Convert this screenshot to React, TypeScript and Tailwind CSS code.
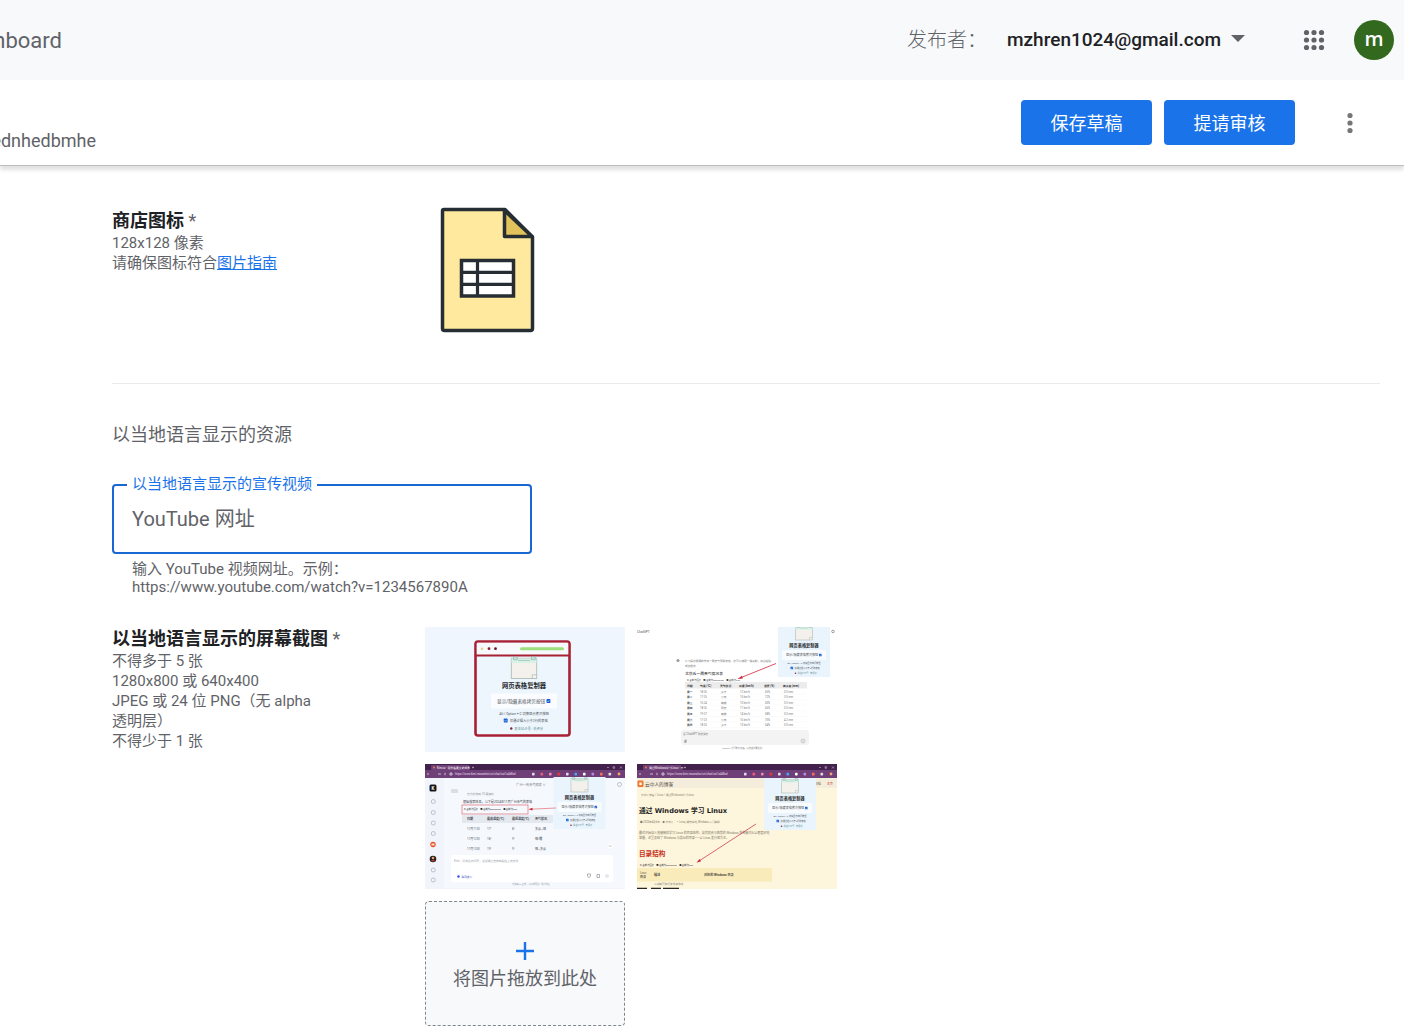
import { useState } from "react";
import type { ReactNode } from "react";
import clsx from "clsx";

const SMALL_TEXT = "text-[15px] leading-5 text-[#5f6368]";

function DotsIcon({ columns, className }: { columns: number[]; className?: string }) {
  return (
    <svg viewBox="0 0 24 24" fill="currentColor" className={className} aria-hidden="true">
      {columns.map((cx) =>
        [4.5, 12, 19.5].map((cy) => <circle key={`${cx}-${cy}`} cx={cx} cy={cy} r="2.6" />)
      )}
    </svg>
  );
}

function SheetIcon() {
  return (
    <svg viewBox="0 0 125 126" className="h-[126px] w-[125px]" role="img" aria-label="商店图标">
      <path
        d="M19 2.5H80L107.500 30V121.500a2 2 0 0 1-2 2H19.500a2 2 0 0 1-2-2V4a1.500 1.500 0 0 1 1.500-1.500z"
        fill="#ffe99e"
        stroke="#262d33"
        strokeWidth="3.500"
        strokeLinejoin="round"
      />
      <path d="M79.500 3.500V29.500H107z" fill="#e2c25b" stroke="#262d33" strokeWidth="3.500" strokeLinejoin="round" />
      <rect x="36.500" y="53.500" width="52" height="35.500" fill="#fff" stroke="#262d33" strokeWidth="3.500" />
      <path d="M36 65.300h53M36 77.300h53M52.500 53v36" stroke="#262d33" strokeWidth="3.200" />
    </svg>
  );
}

function Check({ x, y, s = 2.6 }: { x: number; y: number; s?: number }) {
  return (
    <g>
      <rect x={x} y={y} width={s} height={s} rx="0.4" fill="#1a5fd0" />
      <path
        d={`M${x + s * 0.22} ${y + s * 0.5}l${s * 0.2} ${s * 0.22}l${s * 0.36} ${-s * 0.42}`}
        fill="none"
        stroke="#fff"
        strokeWidth="0.35"
      />
    </g>
  );
}

// Extension popup, drawn around the centre of its title.
function PopupBody() {
  return (
    <g>
      <rect x="-8.500" y="-18.500" width="17" height="13.500" fill="#f4f1ec" stroke="#a3b0ac" strokeWidth="0.5" />
      <rect x="-8.300" y="-18.300" width="16.600" height="3" fill="#d9f2e8" />
      <path d="M-7 -19.500h2.500v2h-2.500zM5 -19.500h2.500v2h-2.500zM-4 -17h8" fill="#c7e2d8" stroke="#6f9c92" strokeWidth="0.3" />
      <path d="M5.500 -5v-2.500h3" fill="none" stroke="#a3b0ac" strokeWidth="0.4" />
      <text y="1.500" textAnchor="middle" fontSize="4.200" fontWeight="700" fill="#26292c">
        网页表格复制器
      </text>
      <rect x="-22" y="5" width="44" height="10" rx="1" fill="#fff" opacity="0.7" />
      <text x="-18" y="11.300" fontSize="3.100" fill="#4b5158">
        显示/隐藏表格拷贝按钮
      </text>
      <Check x={15} y={8.700} />
      <text y="19" textAnchor="middle" fontSize="2.200" fill="#4b5158">
        Alt / Option + C 切换显示拷贝按钮
      </text>
      <Check x={-13.500} y={21.700} />
      <text x="-9.500" y="24" fontSize="2.200" fill="#4b5158">
        仅通过插入小于2行的表格
      </text>
      <circle cx="-8.500" cy="28.300" r="0.8" fill="#7a2838" />
      <text x="-6.500" y="29.200" fontSize="2.200" fill="#4b7f8c">
        关注公众号 · 去评分
      </text>
    </g>
  );
}

function Popup({ x, y }: { x: number; y: number }) {
  return (
    <g transform={`translate(${x} ${y})`}>
      <rect x="-26" y="-20" width="52" height="52" fill="#eaf4fc" />
      <PopupBody />
    </g>
  );
}

function BrowserBar({ title }: { title: string }) {
  const colors = ["#e8d9ee", "#ee5d78", "#f08bb0", "#e63a3a", "#e8d9ee", "#4aa3ff", "#fff", "#b98ae0", "#ff6d5a", "#ddd"];
  return (
    <g>
      <rect width="200" height="14" fill="#6f3f78" />
      <rect width="200" height="6" fill="#43214d" />
      <rect x="6" y="1" width="38" height="5" rx="1" fill="#6f3f78" />
      <circle cx="9" cy="3.500" r="1" fill="#f07c3c" />
      <text x="12" y="4.500" fontSize="2.800" fill="#fff">
        {title}
      </text>
      <path d="M47 3.500h2M48 2.500v2M182 3.500h2M188 2.700h1.600v1.600h-1.600zM195 2.500l2 2M197 2.500l-2 2" stroke="#d9cbe0" strokeWidth="0.5" fill="none" />
      <path d="M4 10h-2M13 10h3M20 8.800v2.400M25 9h2v2h-2z" stroke="#e6dcec" strokeWidth="0.8" fill="none" />
      <text x="30" y="11" fontSize="2.800" fill="#eadff0">
        https://www.kimi.moonshot.cn/chat/cst1s4d8cd
      </text>
      {colors.map((color, i) => (
        <rect key={i} x={107 + i * 8.500} y="8.800" width="2.600" height="2.600" rx="0.600" fill={color} />
      ))}
      <circle cx="194" cy="10" r="1.400" fill="#f7a36b" />
    </g>
  );
}

function Thumb({ label, children }: { label: string; children: ReactNode }) {
  return (
    <svg viewBox="0 0 200 125" className="h-[125px] w-[200px] overflow-hidden" role="img" aria-label={label}>
      {children}
    </svg>
  );
}

function PopupThumb() {
  return (
    <Thumb label="插件弹窗">
      <rect width="200" height="125" fill="#eff6fd" />
      <rect x="50.500" y="14.500" width="94" height="94" rx="2.500" fill="#eef6fd" stroke="#a82034" strokeWidth="2.600" />
      <rect x="51.800" y="15.800" width="91.400" height="12" fill="#f7f8fb" />
      <path d="M50 28.500h95" stroke="#a82034" strokeWidth="2" />
      <circle cx="57" cy="21.700" r="1.300" fill="#e0d48b" />
      <circle cx="64" cy="21.700" r="1.400" fill="#8c1f31" />
      <circle cx="70.500" cy="21.700" r="1.400" fill="#5f1a2a" />
      <rect x="95" y="20.200" width="44" height="3" rx="1.500" fill="#9be07c" />
      <g transform="translate(99 59) scale(1.5)">
        <PopupBody />
      </g>
    </Thumb>
  );
}

const WEATHER_COLUMNS = [50, 63, 83, 102, 127, 146];
const WEATHER_HEAD = ["日期", "气温 (°C)", "天气状况", "风速 (km/h)", "湿度 (%)", "降水量 (mm)"];
const WEATHER_ROWS = [
  ["周一", "18-26", "多云", "12 km/h", "65%", "0.0 mm"],
  ["周二", "17-25", "小雨", "15 km/h", "72%", "3.5 mm"],
  ["周三", "16-24", "晴朗", "10 km/h", "60%", "0.0 mm"],
  ["周四", "18-26", "阴天", "11 km/h", "66%", "0.0 mm"],
  ["周五", "19-27", "晴朗", "14 km/h", "58%", "0.0 mm"],
  ["周六", "17-23", "小雨", "16 km/h", "75%", "4.2 mm"],
  ["周日", "18-25", "多云", "13 km/h", "64%", "0.0 mm"],
];

function ChatThumb() {
  return (
    <Thumb label="ChatGPT 表格">
      <rect width="200" height="125" fill="#fff" />
      <text x="0" y="5.500" fontSize="3.200" fill="#555">
        ChatGPT
      </text>
      <circle cx="41" cy="33.500" r="1.500" fill="#999" />
      <text x="48" y="35" fontSize="2.700" fill="#777">
        以下是您所需的未来一周天气预报表格，您可以使用一键复制，将它粘贴
      </text>
      <text x="48" y="39.500" fontSize="2.700" fill="#777">
        或文档中
      </text>
      <text x="48" y="47.700" fontSize="3.800" fontWeight="500" fill="#333">
        北京近一周天气情况表
      </text>
      <text x="50" y="53.700" fontSize="2.300" fill="#444">
        ⧉ 复制为图片　■ 复制为Markdown　● 复制为CSV
      </text>
      <rect x="48" y="55" width="122" height="6.500" fill="#ececec" />
      {WEATHER_HEAD.map((cell, i) => (
        <text key={cell} x={WEATHER_COLUMNS[i]} y="59.500" fontSize="2.800" fontWeight="700" fill="#333">
          {cell}
        </text>
      ))}
      {WEATHER_ROWS.map((row, r) => (
        <g key={row[0]}>
          {row.map((cell, i) => (
            <text
              key={i}
              x={WEATHER_COLUMNS[i] + (i > 1 ? 1 : 0)}
              y={65.500 + r * 5.600}
              fontSize="2.700"
              fontWeight={i === 0 ? 700 : 400}
              fill={i === 0 ? "#333" : "#777"}
            >
              {cell}
            </text>
          ))}
          <path d={`M48 ${67 + r * 5.600}h122`} stroke="#eee" strokeWidth="0.3" />
        </g>
      ))}
      <rect x="44" y="103" width="128" height="15" rx="3" fill="#f3f3f3" />
      <text x="46" y="108" fontSize="2.600" fill="#777">
        给“ChatGPT”发送消息
      </text>
      <path d="M48 113v3M49 112.500v3" stroke="#555" strokeWidth="0.600" />
      <circle cx="166" cy="114" r="2.200" fill="#ddd" stroke="#aaa" strokeWidth="0.3" />
      <text x="106" y="121.800" textAnchor="middle" fontSize="2.200" fill="#888">
        ChatGPT 也可能会犯错。请核查重要信息。
      </text>
      <Popup x={167} y={18} />
      <path d="M139 36.500L103 51" stroke="#d3263c" strokeWidth="0.8" />
      <path d="M100.500 52l4.500-3.200l0.800 2.800z" fill="#d3263c" />
      <circle cx="196" cy="4.500" r="1.300" fill="none" stroke="#666" strokeWidth="0.600" />
    </Thumb>
  );
}

const KIMI_COLUMNS = [42, 62, 87, 110];
const KIMI_ROWS = [
  ["11月11日", "17°", "8°", "多云~晴"],
  ["11月12日", "18°", "9°", "晴/霾"],
  ["11月13日", "19°", "9°", "晴~多云"],
];

function KimiThumb() {
  return (
    <Thumb label="Kimi 表格">
      <rect width="200" height="125" fill="#f1f4fa" />
      <rect x="19" y="14" width="181" height="110" fill="#f5f8fd" />
      <BrowserBar title="Kimi.ai - 帮你看更大的世界" />
      <rect x="4.500" y="20.500" width="7" height="7" rx="1.500" fill="#16181b" />
      <text x="8" y="25.700" textAnchor="middle" fontSize="4.500" fontWeight="700" fill="#fff">
        K
      </text>
      {[37.500, 48.500, 59, 69.500, 106, 116].map((y) => (
        <rect key={y} x="6.500" y={y - 1.800} width="3.600" height="3.600" rx="1" fill="none" stroke="#9aa3ad" strokeWidth="0.600" />
      ))}
      <circle cx="8" cy="80.500" r="2.700" fill="#e5552a" />
      <path d="M6.500 79.500h3v2h-3z" fill="#ffd9c4" />
      <circle cx="8" cy="95" r="3.300" fill="#26211e" />
      <circle cx="8" cy="94" r="1.300" fill="#e3a36f" />
      <path d="M5.700 97.200q2.300-2.500 4.600 0z" fill="#d9423b" />
      <text x="106" y="22" textAnchor="middle" fontSize="3.200" fill="#737a82">
        广州一周天气预报 ∨
      </text>
      <rect x="26" y="25" width="7" height="4" rx="1" fill="#d9dfe7" />
      <text x="42" y="30.500" fontSize="2.800" fill="#8b929a">
        已为您找到 10 篇资料
      </text>
      <text x="38" y="39.300" fontSize="3.100" fill="#3b4046">
        根据搜索结果，以下是2024年11月广州天气的表格
      </text>
      <text x="39" y="46.300" fontSize="2.300" fill="#333">
        ⧉ 复制为图片　■ 复制为Markdown　● 复制为CSV
      </text>
      <rect x="37" y="41" width="66" height="9" fill="none" stroke="#e36a76" strokeWidth="0.700" />
      <rect x="37" y="51" width="91" height="8" fill="#e4e8ef" />
      {["日期", "最高温度(℃)", "最低温度(℃)", "天气状况"].map((cell, i) => (
        <text key={cell} x={KIMI_COLUMNS[i]} y="56.200" fontSize="3" fontWeight="700" fill="#3b4046">
          {cell}
        </text>
      ))}
      {KIMI_ROWS.map((row, r) =>
        row.map((cell, i) => (
          <text key={`${r}-${i}`} x={KIMI_COLUMNS[i]} y={66 + r * 10} fontSize="3" fill="#555c64">
            {cell}
          </text>
        ))
      )}
      <rect x="26" y="91" width="162" height="27" rx="2" fill="#fff" />
      <text x="29" y="97.500" fontSize="2.800" fill="#9aa3ad">
        Kimi　问我任何问题，试试通过拖放或粘贴上传文件
      </text>
      <circle cx="33.500" cy="112.500" r="1.200" fill="#2b4ff0" />
      <text x="36.500" y="113.500" fontSize="2.700" fill="#4b63c9">
        联网搜索
      </text>
      <path d="M162.500 110h3v2l-1.500 1.800l-1.500-1.800zM172 110.500h2.500v3h-2.500z" fill="none" stroke="#7b828a" strokeWidth="0.600" />
      <circle cx="182" cy="112" r="2" fill="#e5e8ec" />
      <text x="106" y="120.800" textAnchor="middle" fontSize="2.200" fill="#9aa3ad">
        内容由 AI 生成，请仔细甄别 · 用户协议
      </text>
      <circle cx="185" cy="82" r="2.500" fill="#fff" />
      <path d="M184 81.500l1 1l1-1" fill="none" stroke="#555" strokeWidth="0.500" />
      <circle cx="194.500" cy="20.500" r="2" fill="none" stroke="#9aa3ad" strokeWidth="0.600" />
      <Popup x={154.500} y={33} />
      <path d="M131 44L106 45.200" stroke="#e05360" strokeWidth="0.600" />
      <path d="M103.500 45.300l4-1.500v2.600z" fill="#c9283a" />
    </Thumb>
  );
}

function LinuxThumb() {
  return (
    <Thumb label="通过 Windows 学习 Linux">
      <rect width="200" height="125" fill="#fdf5dc" />
      <rect y="14" width="200" height="10" fill="#f5eddc" />
      <BrowserBar title="通过Windows学习Linux - 云" />
      <rect x="0.500" y="16.500" width="6" height="6.500" rx="1.200" fill="#f2762c" />
      <rect x="2.300" y="18.500" width="2.400" height="2.600" fill="#fff" />
      <text x="8" y="21.500" fontSize="4.700" fill="#4d4a43">
        云中人的博客
      </text>
      <text x="4" y="31.500" fontSize="2.700" fill="#8c8674">
        云中人博客 / Linux / 通过Windows学习Linux
      </text>
      <text
        x="2"
        y="48.500"
        fontSize="6.700"
        fontWeight="700"
        fill="#1d1d1b"
        className="font-['DejaVu_Sans','Noto_Sans_CJK_SC',sans-serif]"
      >
        通过 Windows 学习 Linux
      </text>
      <text x="3" y="59" fontSize="2.600" fill="#7e7969">
        ● 2023年4月6日　◆ 云中人　▪ Linux, 操作系统, Windows 入门教程
      </text>
      <text x="2" y="69.500" fontSize="3" fill="#7e7969">
        最近开始深入地接触和学习 Linux 的目录结构，自然就会与熟悉的 Windows 系统做对比以便更好地
      </text>
      <text x="2" y="74.500" fontSize="3" fill="#7e7969">
        掌握，这里总结了 Windows 与类似的目录——以 Linux 发行版为主。
      </text>
      <text x="2" y="92" fontSize="6.600" fontWeight="700" fill="#c8321e">
        目录结构
      </text>
      <text x="3" y="101.500" fontSize="2.300" fill="#333">
        ⧉ 复制为图片　■ 复制为Markdown　● 复制为CSV
      </text>
      <rect x="0" y="104" width="135" height="13.500" fill="#f9ebba" />
      <text x="3" y="109.500" fontSize="2.600" fill="#5b5645">
        Linux
      </text>
      <text x="3" y="114" fontSize="2.900" fontWeight="700" fill="#4d4a43">
        目录
      </text>
      <text x="17" y="111.800" fontSize="3.100" fontWeight="700" fill="#4d4a43">
        描述
      </text>
      <text x="67" y="111.800" fontSize="3.100" fontWeight="700" fill="#4d4a43">
        对应的 Windows 目录
      </text>
      <text x="17" y="121" fontSize="2.700" fill="#7e7969">
        二进制可执行文件和命令
      </text>
      <path d="M0 124.300h10M14 124.300h10M26 124.300h16" stroke="#2a2620" strokeWidth="1.200" />
      <text x="178" y="20.800" fontSize="2.900" fill="#5b5645">
        归档
      </text>
      <text x="190" y="20.800" fontSize="2.900" fill="#c8321e">
        主页
      </text>
      <Popup x={153} y={34} />
      <path d="M119 60L62 97" stroke="#c9283a" strokeWidth="0.7" />
      <path d="M59.500 98.800l3-3.800l1.600 2.300z" fill="#c9283a" />
    </Thumb>
  );
}

function PrimaryButton({ children }: { children: ReactNode }) {
  return (
    <button
      type="button"
      className="h-[45px] w-[131px] rounded bg-[#1a73e8] pt-0.5 text-lg font-normal text-white hover:bg-[#1765cc]"
    >
      {children}
    </button>
  );
}

export default function App() {
  const [videoUrl, setVideoUrl] = useState("");

  return (
    <div
      lang="zh-CN"
      className="min-h-screen bg-white font-['Roboto','Noto_Sans_CJK_SC',sans-serif] text-[#5f6368]"
    >
      <header className="flex h-20 items-center justify-between bg-[#f8f9fb] pr-[10px]">
        <div className="flex w-[62px] justify-end overflow-hidden pt-0.5 text-[22px] leading-7">hboard</div>
        <div className="flex items-center">
          <span className="text-xl font-light">发布者：</span>
          <button type="button" className="ml-5 flex items-center text-[19px] font-medium text-[#202124]">
            mzhren1024@gmail.com
            <svg viewBox="0 0 14 7" className="mb-1 ml-[10px] h-[7px] w-[14px]" fill="#5f6368" aria-hidden="true">
              <path d="M0 0h14L7 7z" />
            </svg>
          </button>
          <button type="button" aria-label="Google 应用" className="ml-[57px]">
            <DotsIcon columns={[4.500, 12, 19.500]} className="size-6" />
          </button>
          <button
            type="button"
            className="ml-7 flex size-10 items-center justify-center rounded-full bg-[#33691e] pb-0.5 font-['Open_Sans',sans-serif] text-xl font-semibold text-white"
          >
            m
          </button>
        </div>
      </header>

      <div className="flex h-[86px] items-center justify-between border-b border-[#bdbdbd] pr-[42px] shadow-[0_4px_4px_rgba(0,0,0,0.12)]">
        <div className="flex w-24 justify-end overflow-hidden pt-9 text-lg">ednhedbmhe</div>
        <div className="flex items-center gap-3">
          <PrimaryButton>保存草稿</PrimaryButton>
          <PrimaryButton>提请审核</PrimaryButton>
          <button type="button" aria-label="更多" className="ml-[31px]">
            <DotsIcon columns={[12]} className="size-6 text-[#757575]" />
          </button>
        </div>
      </div>

      <main className="pt-[41px] pr-6 pb-[10px] pl-28">
        <section className="flex border-b border-[#e8eaed] pb-[50px]">
          <div className="w-[313px] shrink-0 pt-0.5">
            <h2 className="text-lg leading-6 font-bold text-[#202124]">
              商店图标 <span className="font-normal text-[#5f6368]">*</span>
            </h2>
            <p className={SMALL_TEXT}>128x128 像素</p>
            <p className={SMALL_TEXT}>
              请确保图标符合
              <a href="#guide" className="text-[#1a73e8] underline">
                图片指南
              </a>
            </p>
          </div>
          <SheetIcon />
        </section>

        <h3 className="mt-[37px] text-lg leading-7">以当地语言显示的资源</h3>

        <div className="mt-[35px] w-[420px]">
          <div className="relative">
            <label
              htmlFor="video"
              className="absolute -top-[10px] left-[15px] bg-white px-[5px] text-[15px] leading-5 text-[#1a73e8]"
            >
              以当地语言显示的宣传视频
            </label>
            <input
              id="video"
              type="text"
              value={videoUrl}
              onChange={(e) => setVideoUrl(e.target.value)}
              placeholder="YouTube 网址"
              aria-describedby="video-hint"
              className="h-[70px] w-full rounded border-2 border-[#1967d2] px-[18px] text-xl outline-none placeholder:text-[#5f6368]"
            />
          </div>
          <p id="video-hint" className="px-5 pt-1.5 text-[15px] leading-[18px]">
            输入 YouTube 视频网址。示例：
            <br />
            https://www.youtube.com/watch?v=1234567890A
          </p>
        </div>

        <section className="mt-[31px] flex">
          <div className="w-[313px] shrink-0">
            <h2 className="text-lg leading-6 font-bold text-[#202124]">
              以当地语言显示的屏幕截图 <span className="font-normal text-[#5f6368]">*</span>
            </h2>
            <div className={clsx(SMALL_TEXT, "w-[220px]")}>
              <p>不得多于 5 张</p>
              <p>1280x800 或 640x400</p>
              <p>
                JPEG 或 24 位 PNG（无 alpha
                <br />
                透明层）
              </p>
              <p>不得少于 1 张</p>
            </div>
          </div>
          <div className="grid grid-cols-[200px_200px] gap-3">
            <PopupThumb />
            <ChatThumb />
            <KimiThumb />
            <LinuxThumb />
            <button
              type="button"
              className="flex h-[125px] w-[200px] flex-col items-center justify-center rounded border border-dashed border-[#80868b] bg-[#f8f9fb] pt-0.5 text-lg leading-7"
            >
              <svg viewBox="0 0 18 18" className="my-[5px] size-[18px]" stroke="#1a73e8" strokeWidth="2.400" aria-hidden="true">
                <path d="M9 0v18M0 9h18" />
              </svg>
              将图片拖放到此处
            </button>
          </div>
        </section>
      </main>
    </div>
  );
}
